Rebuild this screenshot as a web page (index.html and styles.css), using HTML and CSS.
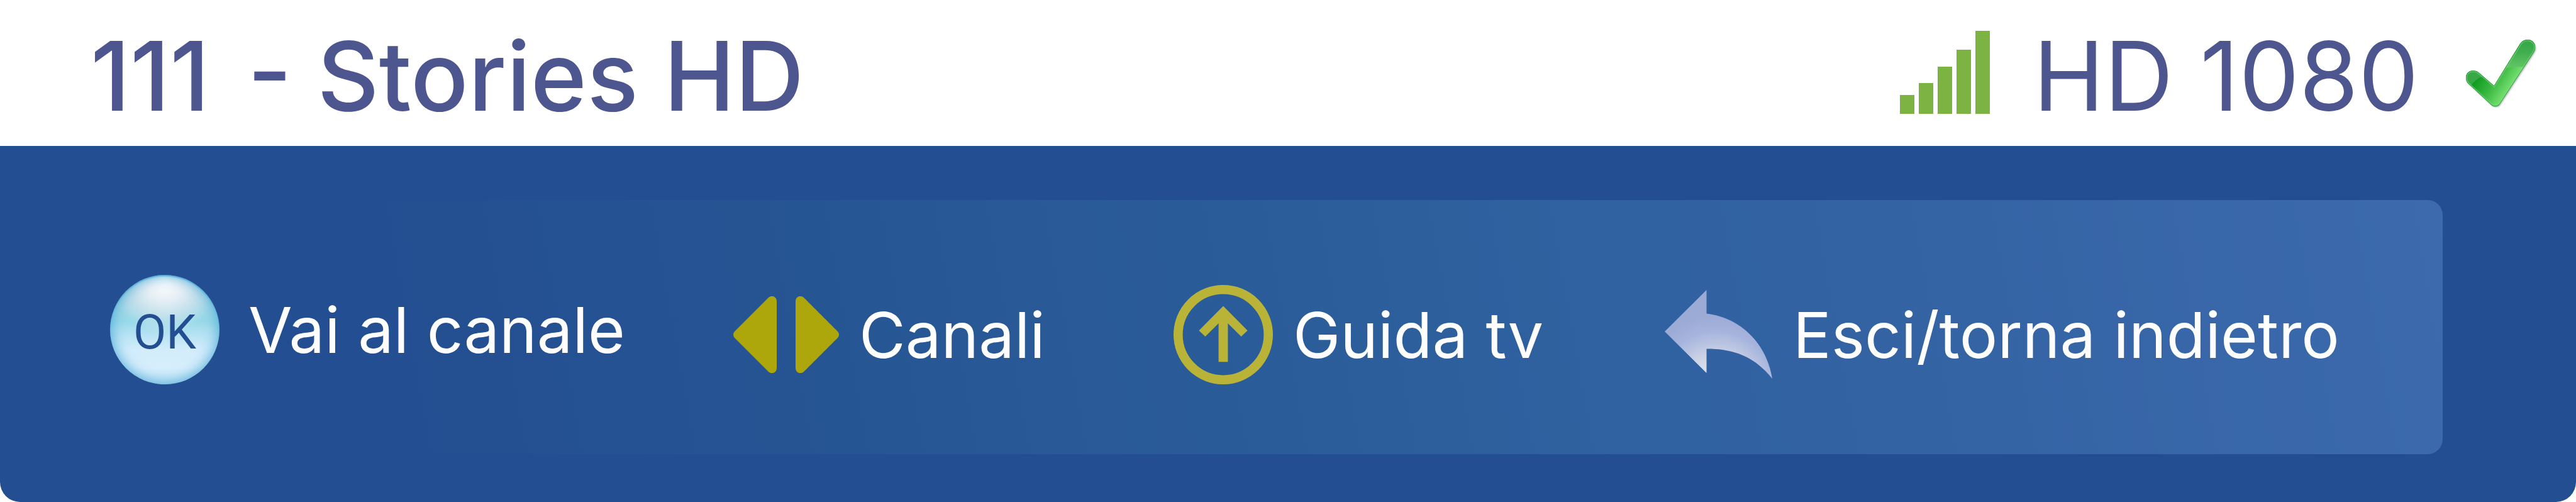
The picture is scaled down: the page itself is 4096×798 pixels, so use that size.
FILE: index.html
```html
<!DOCTYPE html>
<html lang="it">
<head>
<meta charset="utf-8">
<title>111 - Stories HD</title>
<link rel="stylesheet" href="styles.css">
</head>
<body>
<header class="channel">
  <h1 class="channel-name"><span class="channel-number">111</span> - Stories HD</h1>
  <div class="status">
    <svg class="signal" viewBox="0 0 144 132" role="img" aria-label="Segnale">
      <path fill="#7db343" d="M0 102h23v30H0zM30 83h23v49H30zM60 57h23v75H60zM90 30h23v102H90zM120 0h23v132h-23z"/>
    </svg>
    <span class="quality">HD 1080</span>
    <svg class="check" viewBox="0 0 498 498" role="img" aria-label="Disponibile">
      <defs>
        <linearGradient id="tick" gradientUnits="userSpaceOnUse" x1="110" y1="270" x2="290" y2="390">
          <stop offset="0" stop-color="#0f9a20"/>
          <stop offset="0.5" stop-color="#3fbb45"/>
          <stop offset="1" stop-color="#80e878"/>
        </linearGradient>
        <linearGradient id="gloss" x1="0" y1="0" x2="0" y2="1">
          <stop offset="0" stop-color="#2fa442"/>
          <stop offset="0.5" stop-color="#40ae4e"/>
          <stop offset="1" stop-color="#62c766"/>
        </linearGradient>
        <clipPath id="tick-shape">
          <path d="M210 318L365 68C390 26 456 34 458 88C458 102 452 112 446 122L244 430C232 447 207 447 192 432L56 306C30 280 38 228 84 227C106 227 118 238 130 249Z"/>
        </clipPath>
        <filter id="soft" x="-10%" y="-10%" width="120%" height="120%"><feGaussianBlur stdDeviation="5"/></filter>
      </defs>
      <path fill="#667" opacity="0.45" filter="url(#soft)" d="M214 324L369 74C394 32 460 40 462 94C462 108 456 118 450 128L248 436C236 451 211 451 196 438L60 310C34 284 42 234 88 233C110 233 122 244 134 255Z"/>
      <g clip-path="url(#tick-shape)">
        <path fill="url(#tick)" d="M0 0h498v498H0z"/>
        <path fill="url(#gloss)" d="M270 20H498V206H400Q340 202 270 212Z"/>
        <path fill="#36a946" d="M20 210H120L140 262Q105 274 70 318L20 330Z"/>
        <path fill="none" stroke="#2fa340" stroke-width="8" d="M210 318L365 68C390 26 456 34 458 88C458 102 452 112 446 122L244 430C232 447 207 447 192 432L56 306C30 280 38 228 84 227C106 227 118 238 130 249Z"/>
        <path fill="none" stroke="#8fdc91" stroke-opacity="0.65" stroke-width="4" d="M211 326L371 72C392 34 450 42 452 88C452 100 446 110 441 118L240 426C230 440 208 440 196 428L60 302C36 278 46 234 84 233C102 233 114 242 126 253Z"/>
      </g>
    </svg>
  </div>
</header>
<main class="bar">
  <ul class="hints">
    <li class="hint hint-ok">
      <span class="ok-key">OK</span>
      <span>Vai al canale</span>
    </li>
    <li class="hint">
      <svg class="icon-channels" viewBox="0 0 168 122" aria-hidden="true">
        <path fill="#ada70b" d="M55 3C60 -3 69 0 69 8V114C69 122 60 125 55 119L2 66Q-2 61 2 56ZM113 3C108 -3 99 0 99 8V114C99 122 108 125 113 119L166 66Q170 61 166 56Z"/>
      </svg>
      <span>Canali</span>
    </li>
    <li class="hint">
      <svg class="icon-guide" viewBox="0 0 158 158" aria-hidden="true">
        <circle cx="79" cy="79" r="71.7" fill="none" stroke="#b9b438" stroke-width="14.6"/>
        <path fill="#b9b438" d="M79 33.4L117.6 72.5L107.6 82L86.4 61V122.3H71.6V61L50.4 82L40.4 72.5Z"/>
      </svg>
      <span>Guida tv</span>
    </li>
    <li class="hint">
      <svg class="icon-back" viewBox="0 0 172 142" aria-hidden="true">
        <defs>
          <radialGradient id="back" gradientUnits="userSpaceOnUse" cx="82" cy="160" r="118">
            <stop offset="0.2" stop-color="#e6e8ef"/>
            <stop offset="0.5" stop-color="#cbd2e5"/>
            <stop offset="0.8" stop-color="#a6b4dd"/>
            <stop offset="1" stop-color="#9caad6"/>
          </radialGradient>
        </defs>
        <path fill="url(#back)" d="M0 66L66.500 0V37.500C122 44 162 86 171 141C145 108 112 93 66.500 93.500V132Z"/>
      </svg>
      <span>Esci/torna indietro</span>
    </li>
  </ul>
</main>
</body>
</html>
```
FILE: styles.css
```css
* {
  box-sizing: border-box;
}

body {
  margin: 0;
  min-height: 100vh;
  display: flex;
  flex-direction: column;
  background: #fff;
  font-family: Inter, "Liberation Sans", sans-serif;
}

.channel {
  display: flex;
  justify-content: space-between;
  align-items: center;
  padding: 29px 54px 19px 144px;
  color: #4d568f;
  font-size: 152px;
  line-height: 184px;
}

.channel-name {
  margin: 0;
  font-size: inherit;
  font-weight: 500;
}

.channel-number {
  margin-right: 20px;
}

.status {
  display: flex;
  align-items: center;
}

.signal {
  width: 144px;
  height: 132px;
  margin: 0 68px 12px 0;
}

.quality {
  margin-right: 64px;
}

.check {
  width: 132px;
  height: 132px;
  margin-bottom: 6px;
}

.bar {
  flex: 1;
  display: flex;
  padding: 86px 212px 76px 120px;
  background: #234e91;
  border-radius: 0 0 32px 32px;
}

.hints {
  flex: 1;
  display: grid;
  grid-template-columns: 991fr 700fr 781fr 1237fr;
  align-items: center;
  margin: 0;
  padding: 8px 0 0 55px;
  list-style: none;
  border-radius: 24px;
  background: linear-gradient(80deg, rgba(60, 106, 173, 0) 13%, #275694 34%, #2d5f9d 57%, #3564a5 80%, #3c6aad 100%);
}

.hint {
  display: flex;
  align-items: center;
  gap: 32px;
  padding-top: 16px;
  color: #fff;
  font-size: 101px;
  line-height: 124px;
  white-space: nowrap;
}

.hint-ok {
  gap: 46px;
  padding-top: 0;
}

.ok-key {
  width: 174px;
  height: 174px;
  padding-top: 8px;
  border-radius: 50%;
  background:
    radial-gradient(ellipse 48% 50% at 50% 4%, #fff 0, rgba(240, 243, 247, 0.9) 35%, rgba(214, 229, 238, 0.6) 70%, rgba(190, 225, 235, 0) 100%),
    linear-gradient(#b9d8e6 0, #a8d8e6 25%, #98d9e8 42%, #b5e2f3 54%, #d2ecfb 68%, #d8effc 85%, #c5e5f8 100%);
  box-shadow: inset 0 0 22px 1px #4aaad6, inset 0 2px 2px #5db4d5;
  color: #234e91;
  font-family: Roboto, sans-serif;
  font-size: 76px;
  line-height: 166px;
  text-align: center;
}

.icon-channels {
  width: 168px;
  height: 122px;
}

.icon-guide {
  width: 158px;
  height: 158px;
}

.icon-back {
  width: 172px;
  height: 142px;
}
```
